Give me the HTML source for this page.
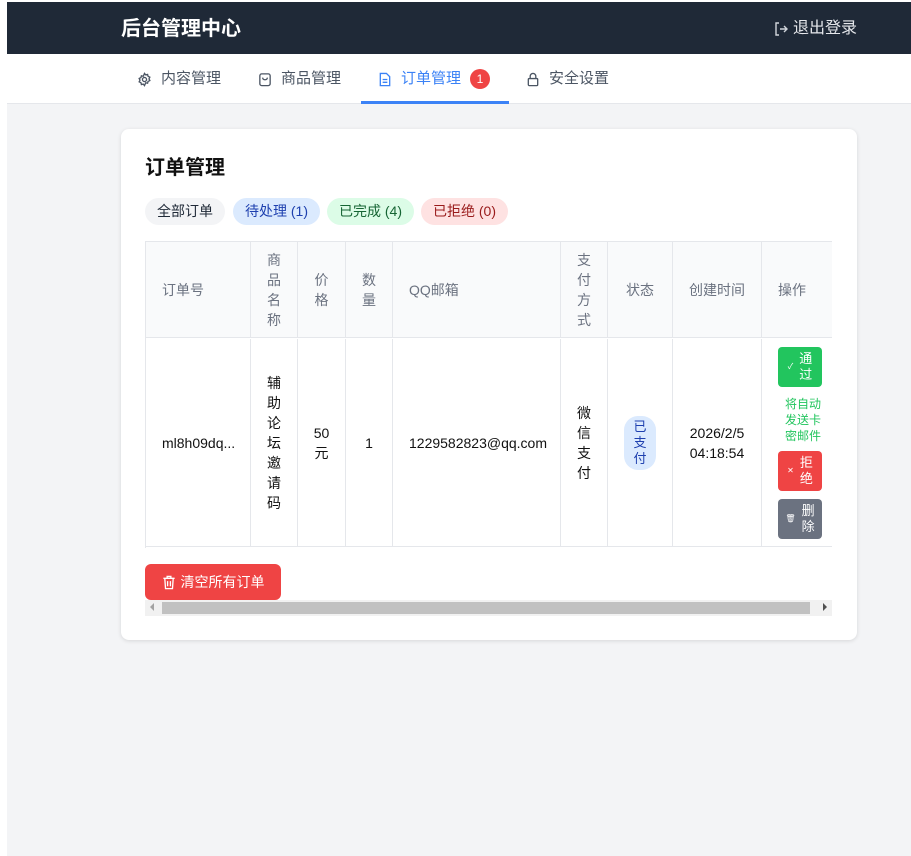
<!DOCTYPE html>
<html><head><meta charset="utf-8"><style>
*{box-sizing:border-box;margin:0;padding:0}
body{width:911px;height:856px;background:#fff;font-family:"Liberation Sans","Noto Sans CJK SC",sans-serif;font-size:14px;position:relative;overflow:hidden}
.a{position:absolute}
.bg{left:7px;top:104px;width:904px;height:752px;background:#f3f4f6}
.hdr{left:7px;top:2px;width:904px;height:52px;background:#1f2937}
.nav{left:7px;top:54px;width:904px;height:50px;background:#fff;border-bottom:1px solid #e5e7eb}
.tab{top:54px;height:50px;line-height:48px;color:#4b5563;font-size:15px;display:flex;align-items:center;gap:9px}
.card{left:121px;top:129px;width:736px;height:511px;background:#fff;border-radius:8px;box-shadow:0 1px 4px rgba(0,0,0,.12)}
.pill{top:198px;height:27px;line-height:27px;border-radius:14px;font-size:14px;padding:0 12px}
.c{position:absolute;border-right:1px solid #e5e7eb;display:flex;align-items:center;justify-content:center;text-align:center;line-height:20px}
.h{top:242px;height:96px;background:#f9fafb;color:#6b7280;border-bottom:1px solid #e5e7eb}
.r{top:339px;height:208px;color:#111;border-bottom:1px solid #e5e7eb}
.v{width:1em;word-break:break-all}
.btn{position:absolute;left:778px;width:44px;height:40px;border-radius:4px;color:#fff;font-size:13px;line-height:16px;display:flex;align-items:center;justify-content:center;gap:6px}
</style></head><body>
<div class="a bg"></div>
<div class="a hdr"></div>
<div class="a" style="left:121px;top:16px;color:#fff;font-size:20px;font-weight:bold;line-height:26px">后台管理中心</div>
<div class="a" style="left:773px;top:18px;color:#e5e7eb;font-size:16px;line-height:22px;display:flex;align-items:center;gap:4px"><svg width="16" height="16" viewBox="0 0 16 16" fill="none" stroke="#d1d5db" stroke-width="1.4"><path d="M6 2H3v12h3M7 8h7M11 5l3 3-3 3"/></svg>退出登录</div>
<div class="a nav"></div>
<div class="a tab" style="left:137px"><svg width="15" height="15" viewBox="0 0 16 16" fill="none" stroke="#4b5563" stroke-width="1.4"><circle cx="8" cy="8" r="2.2"/><path d="M8 1.5l1.3 1.6 2-.5.5 2 1.9.9-.9 1.8.9 1.8-1.9.9-.5 2-2-.5L8 14.5l-1.3-1.6-2 .5-.5-2-1.9-.9.9-1.8-.9-1.8 1.9-.9.5-2 2 .5z"/></svg>内容管理</div>
<div class="a tab" style="left:258px"><svg width="14" height="15" viewBox="0 0 14 16" fill="none" stroke="#4b5563" stroke-width="1.4"><rect x="1.5" y="2" width="11" height="12.5" rx="2"/><path d="M4.5 6c0 3 5 3 5 0"/></svg>商品管理</div>
<div class="a tab" style="left:378px;color:#3b82f6"><svg width="14" height="15" viewBox="0 0 14 16" fill="none" stroke="#3b82f6" stroke-width="1.4"><path d="M2 1.5h6.5l3.5 3.5v9.5H2z M4.5 8h5M4.5 11h5"/></svg>订单管理<span style="display:inline-block;width:20px;height:20px;border-radius:10px;background:#ef4444;color:#fff;font-size:12px;line-height:20px;text-align:center">1</span></div>
<div class="a" style="left:361px;top:101px;width:148px;height:3px;background:#3b82f6"></div>
<div class="a tab" style="left:526px"><svg width="14" height="15" viewBox="0 0 14 16" fill="none" stroke="#4b5563" stroke-width="1.4"><rect x="2" y="7" width="10" height="7.5" rx="1"/><path d="M4 7V4.5a3 3 0 016 0V7"/></svg>安全设置</div>

<div class="a card"></div>
<div class="a" style="left:145px;top:155px;font-size:20px;font-weight:bold;line-height:26px;color:#111">订单管理</div>
<div class="a pill" style="left:145px;background:#f3f4f6;color:#1f2937">全部订单</div>
<div class="a pill" style="left:233px;background:#dbeafe;color:#1e40af">待处理 (1)</div>
<div class="a pill" style="left:327px;background:#dcfce7;color:#166534">已完成 (4)</div>
<div class="a pill" style="left:421px;background:#fee2e2;color:#991b1b">已拒绝 (0)</div>

<div class="a" style="left:145px;top:241px;width:687px;height:307px;border-top:1px solid #e5e7eb;border-left:1px solid #e5e7eb"></div>
<div class="c h" style="left:146px;width:105px;justify-content:flex-start;padding-left:16px">订单号</div>
<div class="c h" style="left:251px;width:47px"><span class="v">商品名称</span></div>
<div class="c h" style="left:298px;width:48px"><span class="v">价格</span></div>
<div class="c h" style="left:346px;width:47px"><span class="v">数量</span></div>
<div class="c h" style="left:393px;width:168px;justify-content:flex-start;padding-left:16px">QQ邮箱</div>
<div class="c h" style="left:561px;width:47px"><span class="v">支付方式</span></div>
<div class="c h" style="left:608px;width:65px">状态</div>
<div class="c h" style="left:673px;width:89px">创建时间</div>
<div class="c h" style="left:762px;width:70px;border-right:none;justify-content:flex-start;padding-left:16px">操作</div>

<div class="c r" style="left:146px;width:105px;justify-content:flex-start;padding-left:16px">ml8h09dq...</div>
<div class="c r" style="left:251px;width:47px"><span class="v">辅助论坛邀请码</span></div>
<div class="c r" style="left:298px;width:48px"><span style="width:20px">50 元</span></div>
<div class="c r" style="left:346px;width:47px">1</div>
<div class="c r" style="left:393px;width:168px;justify-content:flex-start;padding-left:16px">1229582823@qq.com</div>
<div class="c r" style="left:561px;width:47px"><span class="v">微信支付</span></div>
<div class="c r" style="left:608px;width:65px"><span style="background:#dbeafe;color:#1e40af;border-radius:14px;width:32px;padding:3px 0;font-size:13px;line-height:16px">已<br>支<br>付</span></div>
<div class="c r" style="left:673px;width:89px;text-align:left">2026/2/5<br>04:18:54</div>
<div class="c r" style="left:762px;width:70px;border-right:none"></div>
<div class="btn" style="top:347px;background:#22c55e"><span style="font-size:8px">✓</span><span style="width:13px">通过</span></div>
<div class="a" style="left:785px;top:396px;width:40px;color:#22c55e;font-size:12px;line-height:16px">将自动发送卡密邮件</div>
<div class="btn" style="top:451px;background:#ef4444"><span style="font-size:8px">✕</span><span style="width:13px">拒绝</span></div>
<div class="btn" style="top:499px;background:#6b7280"><span style="font-size:8px">🗑</span><span style="width:13px">删除</span></div>

<div class="a" style="left:145px;top:564px;width:136px;height:36px;background:#ef4444;border-radius:6px;color:#fff;font-size:14px;display:flex;align-items:center;justify-content:center;gap:5px"><svg width="14" height="15" viewBox="0 0 14 16" fill="none" stroke="#fff" stroke-width="1.4"><path d="M1 3.5h12M5 3.5V1.5h4v2M2.5 3.5l.8 11h7.4l.8-11M5.5 6.5v5.5M8.5 6.5v5.5"/></svg>清空所有订单</div>
<div class="a" style="left:145px;top:600px;width:687px;height:16px;background:#f1f1f1"></div>
<div class="a" style="left:162px;top:602px;width:648px;height:12px;background:#c1c1c1"></div>
<div class="a" style="left:150px;top:603px;width:0;height:0;border:4px solid transparent;border-right:4px solid #a3a3a3;border-left:none"></div>
<div class="a" style="left:823px;top:603px;width:0;height:0;border:4px solid transparent;border-left:4px solid #505050;border-right:none"></div>
</body></html>
